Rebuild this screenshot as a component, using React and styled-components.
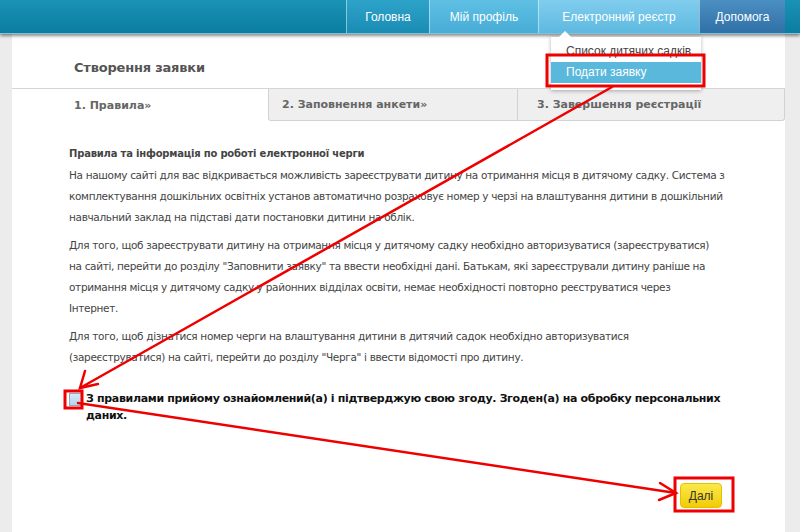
import styled, { createGlobalStyle } from "styled-components";

const GlobalStyle = createGlobalStyle`
  body {
    margin: 0;
    background-color: #ececec;
    font-family: "DejaVu Sans", Verdana, sans-serif;
  }
`;

const StyledPage = styled.div`
  position: relative;
  width: 800px;
  height: 532px;
  overflow: hidden;
  background-color: #ececec;
`;

const StyledHeader = styled.div`
  position: relative;
  z-index: 2;
  height: 33px;
  display: flex;
  justify-content: flex-end;
  padding-right: 15px;
  background: linear-gradient(#1a92b6, #0b7d9f);
  border-bottom: 1px solid #7fc3d6;
  box-shadow: 0 2px 3px rgba(0, 0, 0, 0.45);
`;

const StyledNavItem = styled.div`
  position: relative;
  width: ${(p) => p.width}px;
  display: flex;
  align-items: center;
  justify-content: center;
  font-family: "Liberation Sans", Arial, sans-serif;
  font-size: 12px;
  color: white;
  background: ${(p) => p.bg};
  border-left: 1px solid rgba(255, 255, 255, 0.45);
`;

const StyledDropdown = styled.div`
  position: absolute;
  top: 37px;
  left: 12px;
  width: 150px;
  padding: 4px 0 7px;
  background-color: white;
  box-shadow: 0 1px 4px rgba(0, 0, 0, 0.3);

  &::before {
    content: "";
    position: absolute;
    top: -6px;
    left: 8px;
    border-left: 6px solid transparent;
    border-right: 6px solid transparent;
    border-bottom: 6px solid white;
  }
`;

const StyledDropItem = styled.div`
  height: 21px;
  line-height: 21px;
  padding-left: 15px;
  font-family: "Liberation Sans", Arial, sans-serif;
  font-size: 12px;
  color: ${(p) => (p.active ? "white" : "#444")};
  background-color: ${(p) => (p.active ? "#5bb8dd" : "white")};
`;

const StyledMain = styled.div`
  margin: 0 15px 0 12px;
  height: 498px;
  background-color: white;
  display: flex;
  flex-direction: column;
`;

const StyledTitle = styled.h1`
  margin: 0;
  padding: 26px 0 13px 62px;
  font-size: 13px;
  font-weight: bold;
  color: #555;
  letter-spacing: -0.2px;
`;

const StyledTabs = styled.div`
  display: flex;
  height: 32px;
  border-top: 1px solid #d5d5d5;
`;

const StyledTab = styled.div`
  width: ${(p) => p.width}px;
  flex-shrink: 0;
  display: flex;
  align-items: center;
  padding-left: ${(p) => p.pad}px;
  box-sizing: border-box;
  font-size: 11px;
  font-weight: bold;
  color: #666;
  background-color: ${(p) => (p.active ? "white" : "#efefef")};
  border: ${(p) => (p.active ? "none" : "1px solid #d2d2d2")};
  border-top: none;
  border-left: ${(p) => (p.first ? "1px solid #d2d2d2" : "none")};
  border-radius: ${(p) => (p.first ? "0 0 0 3px" : "0 0 3px 0")};
`;

const StyledContent = styled.div`
  padding: 27px 0 0 57px;
  color: #444;
`;

const StyledSubhead = styled.div`
  font-size: 10px;
  font-weight: bold;
  letter-spacing: -0.2px;
  margin-bottom: 6px;
`;

const StyledParagraph = styled.p`
  margin: 0 0 7px;
  font-size: 10.5px;
  line-height: 21px;
  letter-spacing: -0.33px;
  white-space: nowrap;
`;

const StyledAgree = styled.label`
  display: flex;
  gap: 4px;
  margin-top: 22px;
  font-size: 11px;
  font-weight: bold;
  line-height: 17px;
  letter-spacing: -0.33px;
  color: #111;
`;

const StyledCheckbox = styled.span`
  flex-shrink: 0;
  width: 11px;
  height: 11px;
  margin: 3px 0 0 0;
  border: 1px solid #8aaac4;
  background: linear-gradient(#d6e8f6, #b9d3ea);
`;

const StyledFooter = styled.div`
  margin-top: auto;
  padding: 0 63px 24px 0;
  display: flex;
  justify-content: flex-end;
`;

const StyledButton = styled.button`
  width: 42px;
  height: 25px;
  border: 1px solid #e0c200;
  border-radius: 4px;
  background: linear-gradient(#fbe94a, #f0cc07);
  font-family: "Liberation Sans", Arial, sans-serif;
  font-size: 12px;
  color: #333;
  padding: 0;
`;

const StyledOverlay = styled.svg`
  position: absolute;
  top: 0;
  left: 0;
  z-index: 5;
  pointer-events: none;
`;

const navItems = [
  { label: "Головна", width: 82, bg: "linear-gradient(#2ea3c9, #1a8cb4)" },
  { label: "Мій профіль", width: 108, bg: "linear-gradient(#5fc0e3, #47acd6)" },
  {
    label: "Електронний реєстр",
    width: 160,
    bg: "linear-gradient(#80cdee, #5eb9e0)",
    dropdown: true,
  },
  { label: "Допомога", width: 85, bg: "linear-gradient(#4c8fc2, #2f70a6)" },
];

const paragraphs = [
  [
    "На нашому сайті для вас відкривається можливість зареєструвати дитину на отримання місця в дитячому садку. Система з",
    "комплектування дошкільних освітніх установ автоматично розраховує номер у черзі на влаштування дитини в дошкільний",
    "навчальний заклад на підставі дати постановки дитини на облік.",
  ],
  [
    "Для того, щоб зареєструвати дитину на отримання місця у дитячому садку необхідно авторизуватися (зареєструватися)",
    "на сайті, перейти до розділу \"Заповнити заявку\" та ввести необхідні дані. Батькам, які зареєстрували дитину раніше на",
    "отримання місця у дитячому садку у районних відділах освіти, немає необхідності повторно реєструватися через",
    "Інтернет.",
  ],
  [
    "Для того, щоб дізнатися номер черги на влаштування дитини в дитячий садок необхідно авторизуватися",
    "(зареєструватися) на сайті, перейти до розділу \"Черга\" і ввести відомості про дитину.",
  ],
];

const App = () => {
  return (
    <StyledPage>
      <GlobalStyle />
      <StyledHeader>
        {navItems.map((item) => (
          <StyledNavItem key={item.label} width={item.width} bg={item.bg}>
            {item.label}
            {item.dropdown && (
              <StyledDropdown>
                <StyledDropItem>Список дитячих садків</StyledDropItem>
                <StyledDropItem active>Подати заявку</StyledDropItem>
              </StyledDropdown>
            )}
          </StyledNavItem>
        ))}
      </StyledHeader>

      <StyledMain>
        <StyledTitle>Створення заявки</StyledTitle>
        <StyledTabs>
          <StyledTab active width={256} pad={62}>
            1. Правила»
          </StyledTab>
          <StyledTab first width={250} pad={13}>
            2. Заповнення анкети»
          </StyledTab>
          <StyledTab width={267} pad={19}>
            3. Завершення реєстрації
          </StyledTab>
        </StyledTabs>

        <StyledContent>
          <StyledSubhead>
            Правила та інформація по роботі електронної черги
          </StyledSubhead>
          {paragraphs.map((lines, i) => (
            <StyledParagraph key={i}>
              {lines.map((line, j) => (
                <span key={j}>
                  {line}
                  {j < lines.length - 1 && <br />}
                </span>
              ))}
            </StyledParagraph>
          ))}
          <StyledAgree>
            <StyledCheckbox />
            <span>
              З правилами прийому ознайомлений(а) і підтверджую свою згоду.
              Згоден(а) на обробку персональних
              <br />
              даних.
            </span>
          </StyledAgree>
        </StyledContent>

        <StyledFooter>
          <StyledButton>Далі</StyledButton>
        </StyledFooter>
      </StyledMain>

      <StyledOverlay width="800" height="532" viewBox="0 0 800 532">
        <g stroke="#ee0000" strokeWidth="3" fill="none">
          <rect x="547" y="55" width="157" height="31" />
          <rect x="65" y="391" width="17" height="17" />
          <rect x="675" y="478" width="58" height="33" />
        </g>
        <g stroke="#ee0000" strokeWidth="2.5" fill="none" strokeLinecap="round">
          <line x1="612" y1="87" x2="80" y2="388" />
          <polyline points="85,371 80,388 98,384" />
          <line x1="78" y1="403" x2="676" y2="493" />
          <polyline points="660,483 676,493 659,500" />
        </g>
      </StyledOverlay>
    </StyledPage>
  );
};

export default App;
